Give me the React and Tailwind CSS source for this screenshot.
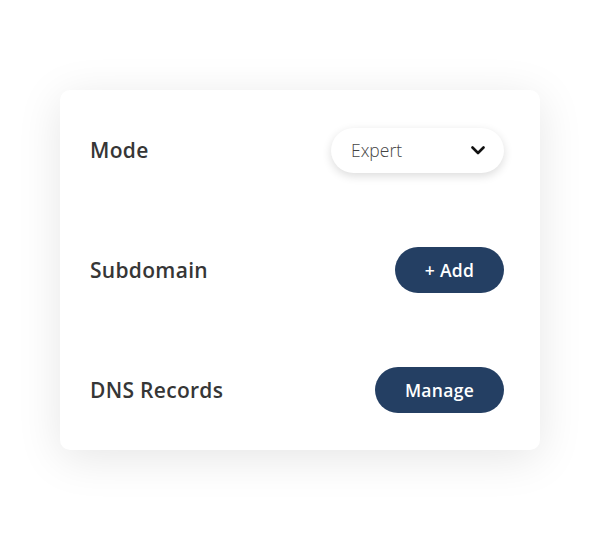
import React from "react";

const font = { fontFamily: "'Open Sans', 'Noto Sans', sans-serif" };

const Row = ({ label, children }) => (
  <div className="flex h-[120px] items-center justify-between pl-[30px] pr-[36px]">
    <span className="mt-[2px] text-[21px] font-semibold tracking-[0.3px] text-[#363636]">{label}</span>
    {children}
  </div>
);

const Chevron = () => (
  <svg width="14" height="9" viewBox="0 0 14 9" fill="none">
    <path d="M1.5 1.5L7 7L12.5 1.5" stroke="#111" strokeWidth="2.6" strokeLinecap="round" strokeLinejoin="round" />
  </svg>
);

export default function App() {
  return (
    <div className="flex h-[540px] w-full items-center justify-center bg-white" style={font}>
      <div className="w-[480px] rounded-[10px] bg-white shadow-[0_8px_45px_rgba(0,0,0,0.1)]">
        <Row label="Mode">
          <button className="flex h-[45px] w-[173px] items-center justify-between rounded-full bg-white pl-5 pr-[19px] shadow-[0_3px_10px_rgba(0,0,0,0.14)]">
            <span className="text-[17.5px] font-light text-[#444444]">Expert</span>
            <Chevron />
          </button>
        </Row>
        <Row label="Subdomain">
          <button className="h-[46px] w-[109px] rounded-full bg-[#243f63] text-[17.5px] font-semibold tracking-[0.3px] text-white">
            + Add
          </button>
        </Row>
        <Row label="DNS Records">
          <button className="h-[46px] w-[129px] rounded-full bg-[#243f63] text-[17.5px] font-semibold tracking-[0.3px] text-white">
            Manage
          </button>
        </Row>
      </div>
    </div>
  );
}
